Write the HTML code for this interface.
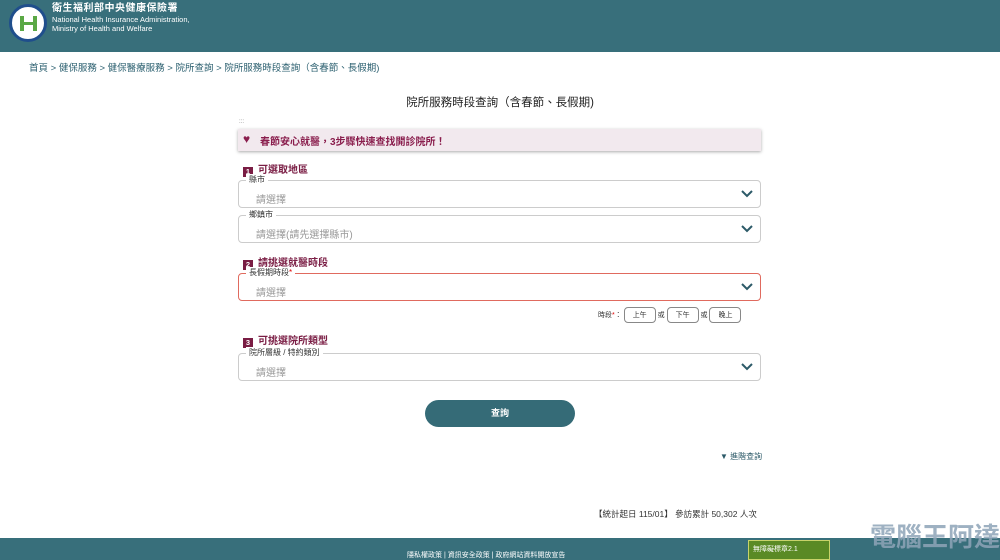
<!DOCTYPE html><html><head><meta charset="utf-8"><style>
*{margin:0;padding:0;box-sizing:border-box}
body{width:1000px;height:560px;overflow:hidden;background:#fff;font-family:"Liberation Sans","Noto Sans CJK TC",sans-serif;position:relative;color:#333}
.hd{position:absolute;left:0;top:0;width:1000px;height:52px;background:#386f7b}
.logo{position:absolute;left:9px;top:4px;width:38px;height:38px;border-radius:50%;background:#fff;border:3px solid #1f4e8c}
.t1{position:absolute;left:52px;top:3px;color:#fff;font-size:10px;line-height:12px;font-weight:bold;letter-spacing:.5px}
.t2{position:absolute;left:52px;top:15px;color:#fff;font-size:7.5px;line-height:9px}
.bc{position:absolute;left:29px;top:60px;font-size:9.5px;color:#2c6070}
.ti{position:absolute;left:0;width:1000px;top:94px;text-align:center;font-size:11.5px;color:#222}
.ban{position:absolute;left:238px;top:129px;width:523px;height:22px;background:#f2e9ee;box-shadow:0 1px 3px #aaa;font-size:10px;font-weight:bold;color:#8a1e4d;padding:4px 0 0 22px}
.h{position:absolute;left:243px;font-size:10px;font-weight:bold;color:#7a1d44}
.h b{display:inline-block;width:10px;height:10px;background:#7a1d44;color:#fff;font-size:7.5px;text-align:center;line-height:10px;margin-right:5px;vertical-align:-1px}
.f{position:absolute;left:238px;width:523px;height:28px;border:1px solid #ccc;border-radius:4px}
.f .l{position:absolute;left:7px;top:-7px;background:#fff;font-size:8px;line-height:11px;padding:0 3px;color:#333}
.f .p{position:absolute;left:17px;top:10px;font-size:10px;color:#999}
.f svg{position:absolute;right:7px;top:9px}
.btn{display:inline-block;border:1px solid #888;border-radius:4px;font-size:7px;padding:2px 8px;background:#fff;vertical-align:middle}
.ft{position:absolute;left:0;top:538px;width:1000px;height:22px;background:#386f7b}
</style></head><body>
<div class="hd"><div class="logo"><div style="position:absolute;left:8px;top:9px;width:17px;height:15px;border:4px solid #5aa845;border-top:none;border-bottom:none"></div><div style="position:absolute;left:10px;top:15px;width:13px;height:3px;background:#5aa845"></div></div>
<div class="t1">衛生福利部中央健康保險署</div>
<div class="t2">National Health Insurance Administration,<br>Ministry of Health and Welfare</div></div>
<div class="bc">首頁 &gt; 健保服務 &gt; 健保醫療服務 &gt; 院所查詢 &gt; 院所服務時段查詢（含春節、長假期)</div>
<div class="ti">院所服務時段查詢（含春節、長假期)</div>
<div style="position:absolute;left:239px;top:119px;font-size:6px;color:#777">:::</div>
<div class="ban"><span style="position:absolute;left:5px;top:3px;color:#8a1e4d;font-size:12px">♥</span>春節安心就醫，3步驟快速查找開診院所！</div>
<div class="h" style="top:161px"><b>1</b>可選取地區</div>
<div class="f" style="top:180px"><span class="l">縣市</span><span class="p">請選擇</span><svg width="12" height="8"><path d="M1 1l5 5 5-5" stroke="#2c5a68" stroke-width="2" fill="none"/></svg></div>
<div class="f" style="top:215px"><span class="l">鄉鎮市</span><span class="p">請選擇(請先選擇縣市)</span><svg width="12" height="8"><path d="M1 1l5 5 5-5" stroke="#2c5a68" stroke-width="2" fill="none"/></svg></div>
<div class="h" style="top:254px"><b>2</b>請挑選就醫時段</div>
<div class="f" style="top:273px;border-color:#e06a5e"><span class="l">長假期時段<span style="color:#d00">*</span></span><span class="p">請選擇</span><svg width="12" height="8"><path d="M1 1l5 5 5-5" stroke="#2c5a68" stroke-width="2" fill="none"/></svg></div>
<div style="position:absolute;left:598px;top:307px;font-size:7px">時段<span style="color:#d00">*</span>： <span class="btn">上午</span> 或 <span class="btn">下午</span> 或 <span class="btn">晚上</span></div>
<div class="h" style="top:332px"><b>3</b>可挑選院所類型</div>
<div class="f" style="top:353px"><span class="l">院所層級 / 特約類別</span><span class="p">請選擇</span><svg width="12" height="8"><path d="M1 1l5 5 5-5" stroke="#2c5a68" stroke-width="2" fill="none"/></svg></div>
<div style="position:absolute;left:425px;top:400px;width:150px;height:27px;border-radius:14px;background:#356b77;color:#fff;font-size:9px;font-weight:bold;text-align:center;line-height:27px">查詢</div>
<div style="position:absolute;left:720px;top:451px;font-size:8px;color:#2c5a68">▼ 進階查詢</div>
<div style="position:absolute;left:594px;top:508px;font-size:8.5px">【統計起日 115/01】 參訪累計 50,302 人次</div>
<div class="ft"><div style="position:absolute;left:407px;top:12px;color:#fff;font-size:7px">隱私權政策 | 資訊安全政策 | 政府網站資料開放宣告</div>
<div style="position:absolute;left:748px;top:2px;width:82px;height:20px;background:#5a8a25;border:1px solid #c9d36a;color:#fff;font-size:7px;padding:3px 4px">無障礙標章2.1</div></div>
<div style="position:absolute;left:870px;top:517px;font-size:26px;font-weight:bold;color:#8ea4b8;opacity:.85">電腦王阿達</div>
</body></html>
